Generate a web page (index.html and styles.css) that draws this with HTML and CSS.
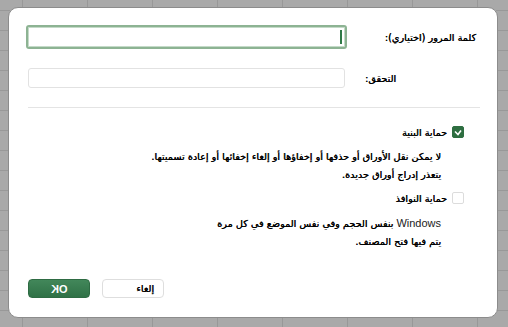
FILE: index.html
```html
<!DOCTYPE html>
<html lang="ar" dir="rtl">
<head>
    <meta charset="UTF-8">
    <meta name="viewport" content="width=device-width, initial-scale=1.0"/>
    <title>حماية المصنف</title>
    <link rel="stylesheet" href="styles.css">
</head>
<body>
<div class="dialog">
    <div class="row row-pass">
        <label class="label">كلمة المرور (اختياري):</label>
        <div class="field focused"><span class="caret"></span></div>
    </div>

    <div class="row row-verify">
        <label class="label">التحقق:</label>
        <div class="field"></div>
    </div>

    <div class="divider"></div>

    <div class="option">
        <span class="check checked">
            <svg width="8" height="7" viewBox="0 0 8 7"><path d="M1 2.5 L4 5.5 L7 1.5" fill="none" stroke="#fff" stroke-width="1.6"/></svg>
        </span>
        <span>حماية البنية</span>
    </div>
    <p class="hint">لا يمكن نقل الأوراق أو حذفها أو إخفاؤها أو إلغاء إخفائها أو إعادة تسميتها.<br>يتعذر إدراج أوراق جديدة.</p>

    <div class="option option-win">
        <span class="check"></span>
        <span>حماية النوافذ</span>
    </div>
    <p class="hint"><span class="latin">Windows</span> بنفس الحجم وفي نفس الموضع في كل مرة<br>يتم فيها فتح المصنف.</p>

    <div class="actions">
        <button class="btn cancel">إلغاء</button>
        <button class="btn primary"><span class="mirror">OK</span></button>
    </div>
</div>
</body>
</html>
```

FILE: styles.css
```css
* {
    box-sizing: border-box;
}
html, body {
    margin: 0;
    padding: 0;
    height: 100%;
    overflow: hidden;
}
body {
    background-color: #a9a9a9;
    background-image:
        linear-gradient(to right, #989898 1px, transparent 1px),
        linear-gradient(to bottom, #989898 1px, transparent 1px);
    background-size: 65px 20px;
    background-position: 22px 10px;
    font-family: "DejaVu Sans", sans-serif;
    font-size: 9.7px;
    color: #000;
    text-shadow: 0.35px 0 0 #000;
    padding: 7px 10px 9px 8px;
}
.dialog {
    display: flex;
    flex-direction: column;
    height: 311px;
    background-color: #fff;
    border: 1px solid #8c8c8c;
    border-radius: 10px;
    padding: 17px 17px 19px 19px;
}
.row {
    display: flex;
    align-items: center;
}
.row-pass {
    justify-content: space-between;
}
.row-pass .label {
    margin-right: 4px;
}
.row-verify {
    justify-content: flex-end;
    gap: 20px;
    margin-top: 19px;
}
.field {
    width: 317px;
    height: 20px;
    border: 1px solid #e2e2e2;
    border-radius: 3px;
    background: #fff;
}
.focused {
    width: 321px;
    height: 24px;
    margin-left: -2px;
    border: 2px solid #8db393;
    box-shadow: inset 0 0 0 1px #c4dac8;
    display: flex;
    align-items: center;
    padding-right: 3px;
}
.caret {
    width: 2px;
    height: 14px;
    background: #2f7a47;
}
.divider {
    height: 1px;
    background: #e4e4e4;
    margin-top: 19px;
}
.option {
    display: flex;
    align-items: center;
    gap: 5px;
    margin: 18px 16px 0 0;
    height: 12px;
}
.option-win {
    margin-top: 8px;
}
.check {
    width: 12px;
    height: 12px;
    border: 1px solid #dcdcdc;
    border-radius: 2px;
    background: #fff;
    display: flex;
    align-items: center;
    justify-content: center;
}
.checked {
    background: #2e6e41;
    border-color: #2e6e41;
}
.hint {
    margin: 10px 39px 0 0;
    line-height: 18px;
    white-space: nowrap;
}
.latin {
    font-family: "Liberation Sans", sans-serif;
    font-size: 11px;
    color: #222;
    text-shadow: none;
}
.actions {
    margin-top: auto;
    display: flex;
    justify-content: flex-end;
    gap: 12px;
}
.btn {
    width: 62px;
    height: 19px;
    border-radius: 4px;
    font-family: "DejaVu Sans", sans-serif;
    font-size: 9.7px;
    padding: 0;
    cursor: pointer;
}
.cancel {
    background: #fff;
    border: 1px solid #dedede;
    color: #000;
    text-shadow: 0.35px 0 0 #000;
    text-align: right;
    padding-right: 9px;
}
.primary {
    background: linear-gradient(#42875a, #2f7146);
    border: 1px solid #2e6b43;
    color: #fff;
    font-family: "Liberation Sans", sans-serif;
    font-size: 11px;
    font-weight: bold;
}
.mirror {
    display: inline-block;
    transform: scaleX(-1);
}
```
